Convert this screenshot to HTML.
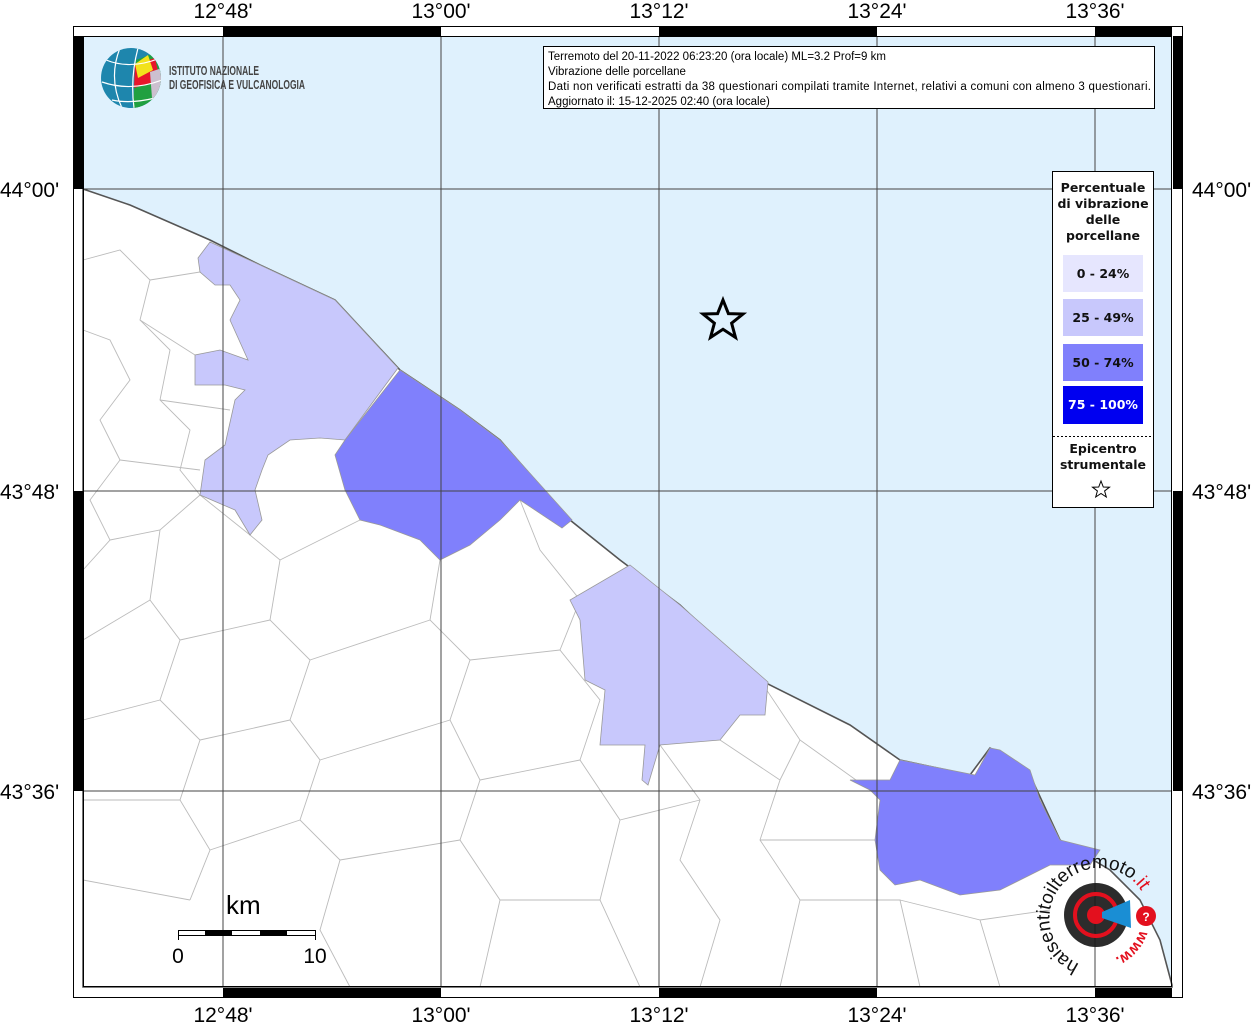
<!DOCTYPE html>
<html><head><meta charset="utf-8"><style>
html,body{margin:0;padding:0;background:#fff;}
svg{display:block;font-family:"Liberation Sans",sans-serif;}
</style></head><body>
<svg width="1255" height="1024" viewBox="0 0 1255 1024" xmlns="http://www.w3.org/2000/svg">
<rect width="1255" height="1024" fill="#fff"/>
<rect x="83" y="36" width="1089" height="951" fill="#dff1fd"/>
<path d="M83,189 L130,205 L210,240 L260,265 L335,300 L400,370 L460,410 L500,440 L570,520 L620,560 L680,605 L760,680 L850,725 L900,760 L970,775 L990,748 L1030,775 L1060,840 L1110,870 L1140,900 L1160,940 L1172,985 L1172,987 L83,987 Z" fill="#fff" stroke="#555" stroke-width="1.6"/>
<g fill="none" stroke="#bbb" stroke-width="0.9">
<path d="M83,260 L120,250 L150,280 L140,320 L170,350 L160,400 L190,430 L180,470 L200,495"/>
<path d="M83,330 L110,340 L130,380 L100,420 L120,460 L90,500 L110,540 L83,570"/>
<path d="M150,280 L200,272 M140,320 L195,355 M160,400 L230,410 M120,460 L200,470"/>
<path d="M110,540 L160,530 L200,495 L250,535 L280,560 L320,540 L360,520"/>
<path d="M160,530 L150,600 L180,640 L160,700 L200,740 L180,800 L210,850 L190,900"/>
<path d="M83,640 L150,600 M83,720 L160,700 M83,800 L180,800 M83,880 L190,900"/>
<path d="M280,560 L270,620 L310,660 L290,720 L320,760 L300,820 L340,860 L320,930 L350,987"/>
<path d="M180,640 L270,620 M200,740 L290,720 M210,850 L300,820"/>
<path d="M440,560 L430,620 L470,660 L450,720 L480,780 L460,840 L500,900 L480,987"/>
<path d="M310,660 L430,620 M320,760 L450,720 M340,860 L460,840"/>
<path d="M520,500 L540,550 L580,600 L560,650 L600,700 L580,760 L620,820 L600,900 L640,987"/>
<path d="M470,660 L560,650 M480,780 L580,760 M500,900 L600,900"/>
<path d="M660,745 L700,800 L680,860 L720,920 L700,987 M720,740 L780,780 L760,840 L800,900 L780,987"/>
<path d="M620,820 L700,800 M760,680 L800,740 L780,780 M800,740 L870,790 M760,840 L875,840 M800,900 L900,900 L920,987"/>
<path d="M900,900 L980,920 L1000,987 M980,920 L1050,910"/>
<path d="M240,300 L300,330 L330,380 M300,330 L290,440"/>
</g>
<g stroke="#999" stroke-width="0.8">
<path d="M198,258 L210,242 L260,265 L335,300 L398,368 L345,440 L320,438 L290,440 L268,455 L262,470 L255,490 L262,520 L250,535 L235,510 L200,495 L205,460 L225,445 L235,400 L245,390 L225,385 L195,385 L195,355 L220,350 L248,360 L230,320 L240,300 L230,285 L215,285 L200,272 Z" fill="#c8c8fc"/>
<path d="M400,370 L460,410 L500,440 L572,520 L562,528 L520,500 L500,520 L470,545 L440,560 L420,540 L380,525 L360,520 L345,490 L335,455 L345,440 Z" fill="#8080fc"/>
<path d="M630,565 L680,605 L768,682 L765,715 L740,715 L720,740 L660,745 L648,785 L642,780 L645,745 L600,745 L605,690 L585,680 L580,620 L570,600 Z" fill="#c8c8fc"/>
<path d="M850,780 L870,790 L880,800 L875,840 L880,870 L895,885 L920,880 L960,895 L1000,890 L1050,865 L1090,865 L1100,850 L1060,840 L1040,800 L1030,770 L1000,750 L990,748 L975,775 L900,760 L890,780 Z" fill="#8080fc"/>
</g>
<g stroke="#444" stroke-width="1">
<line x1="223" y1="36" x2="223" y2="987"/><line x1="441" y1="36" x2="441" y2="987"/>
<line x1="659" y1="36" x2="659" y2="987"/><line x1="877" y1="36" x2="877" y2="987"/>
<line x1="1095" y1="36" x2="1095" y2="987"/>
<line x1="83" y1="189" x2="1172" y2="189"/><line x1="83" y1="491" x2="1172" y2="491"/>
<line x1="83" y1="791" x2="1172" y2="791"/>
</g>
<rect x="73.5" y="26.5" width="1109" height="971" fill="none" stroke="#000"/>
<rect x="83.5" y="36.5" width="1088" height="950" fill="none" stroke="#000"/>
<g fill="#000">
<rect x="223" y="27" width="218" height="9"/><rect x="659" y="27" width="218" height="9"/><rect x="1095" y="27" width="77" height="9"/>
<rect x="223" y="988" width="218" height="9"/><rect x="659" y="988" width="218" height="9"/><rect x="1095" y="988" width="77" height="9"/>
<rect x="74" y="36" width="9" height="153"/><rect x="74" y="491" width="9" height="300"/>
<rect x="1173" y="36" width="9" height="153"/><rect x="1173" y="491" width="9" height="300"/>
</g>
<g font-size="21" fill="#000" text-anchor="middle">
<text x="223" y="18">12°48'</text><text x="441" y="18">13°00'</text><text x="659" y="18">13°12'</text><text x="877" y="18">13°24'</text><text x="1095" y="18">13°36'</text>
<text x="223" y="1022">12°48'</text><text x="441" y="1022">13°00'</text><text x="659" y="1022">13°12'</text><text x="877" y="1022">13°24'</text><text x="1095" y="1022">13°36'</text>
</g>
<g font-size="21" fill="#000">
<text x="0" y="197">44°00'</text><text x="0" y="499">43°48'</text><text x="0" y="799">43°36'</text>
<text x="1192" y="197">44°00'</text><text x="1192" y="499">43°48'</text><text x="1192" y="799">43°36'</text>
</g>
<defs><clipPath id="g"><circle cx="131" cy="78" r="30"/></clipPath></defs>
<g clip-path="url(#g)">
<rect x="100" y="47" width="62" height="62" fill="#1e86ad"/>
<path d="M136,60 L162,50 L162,109 L133,109 Z" fill="#20a040"/>
<path d="M135,64 L155,58 L160,80 L134,88 Z" fill="#e8162a"/>
<path d="M135,64 L148,55 L153,70 L138,78 Z" fill="#f2e21c"/>
<path d="M150,72 L162,68 L162,95 L152,98 Z" fill="#ccc0cf"/>
<path d="M106,60 Q131,70 160,58 M102,82 Q131,92 162,80 M112,100 Q131,104 155,98 M120,48 Q108,78 122,108 M138,48 Q130,78 134,108" stroke="#fff" stroke-width="1.2" fill="none"/>
</g>
<g font-family="'Liberation Sans Narrow','Liberation Sans',sans-serif" font-size="12.5" font-weight="bold" fill="#444">
<text x="169" y="75" textLength="90" lengthAdjust="spacingAndGlyphs">ISTITUTO NAZIONALE</text>
<text x="169" y="89" textLength="136" lengthAdjust="spacingAndGlyphs">DI GEOFISICA E VULCANOLOGIA</text>
</g>
<rect x="543.5" y="46.5" width="611" height="62" fill="#fff" stroke="#000"/>
<g font-size="11.5" fill="#000">
<text x="548" y="60">Terremoto del 20-11-2022 06:23:20 (ora locale) ML=3.2 Prof=9 km</text>
<text x="548" y="75">Vibrazione delle porcellane</text>
<text x="548" y="90" textLength="603">Dati non verificati estratti da 38 questionari compilati tramite Internet, relativi a comuni con almeno 3 questionari.</text>
<text x="548" y="105">Aggiornato il: 15-12-2025 02:40 (ora locale)</text>
</g>
<path d="M723,300 L728.4,313.6 L743,314 L731.6,323.2 L735.5,337.5 L723,329.3 L710.5,337.5 L714.4,323.2 L703,314 L717.6,313.6 Z" fill="none" stroke="#000" stroke-width="3"/>
<rect x="1052.5" y="171.5" width="101" height="336" fill="#fff" stroke="#000"/>
<g font-family="'DejaVu Sans',sans-serif" font-weight="bold" font-size="12.5" text-anchor="middle" fill="#111">
<text x="1103" y="192">Percentuale</text><text x="1103" y="208">di vibrazione</text><text x="1103" y="224">delle</text><text x="1103" y="240">porcellane</text>
<rect x="1063" y="255" width="80" height="37" fill="#e6e6fe"/><text x="1103" y="278">0 - 24%</text>
<rect x="1063" y="299" width="80" height="37" fill="#c8c8fc"/><text x="1103" y="322">25 - 49%</text>
<rect x="1063" y="344" width="80" height="37" fill="#8080fc"/><text x="1103" y="367">50 - 74%</text>
<rect x="1063" y="386" width="80" height="38" fill="#0000f0"/><text x="1103" y="409" fill="#fff">75 - 100%</text>
<text x="1103" y="453">Epicentro</text><text x="1103" y="469">strumentale</text>
</g>
<line x1="1053" y1="436.5" x2="1153" y2="436.5" stroke="#000" stroke-dasharray="2,2"/>
<path d="M1101,481 L1103.3,487 L1109.5,487.2 L1104.6,491 L1106.3,497 L1101,493.5 L1095.7,497 L1097.4,491 L1092.5,487.2 L1098.7,487 Z" fill="none" stroke="#000" stroke-width="1"/>
<text x="226" y="914" font-size="26" fill="#000">km</text>
<rect x="178.5" y="930.5" width="137" height="5" fill="#fff" stroke="#000"/>
<rect x="205" y="931" width="27" height="4" fill="#000"/><rect x="260" y="931" width="27" height="4" fill="#000"/>
<line x1="178.5" y1="930" x2="178.5" y2="940" stroke="#000"/><line x1="315.5" y1="930" x2="315.5" y2="940" stroke="#000"/>
<text x="178" y="963" font-size="21" text-anchor="middle">0</text><text x="315" y="963" font-size="21" text-anchor="middle">10</text>
<circle cx="1096" cy="915" r="32" fill="#1a1a1a" opacity="0.92"/>
<circle cx="1096" cy="915" r="21" fill="none" stroke="#e3101e" stroke-width="4"/>
<circle cx="1096" cy="915" r="9" fill="#e3101e"/>
<path d="M1102,912 L1130,900 L1131,928 L1102,918 Z" fill="#1a8ed4"/>
<circle cx="1146" cy="916" r="10" fill="#e3101e"/><text x="1146" y="921" font-size="12" fill="#fff" text-anchor="middle" font-weight="bold">?</text>
<defs><path id="arc" d="M1096,968 A50,50 0 1,1 1146,900"/><path id="arc2" d="M1140,930 A46,46 0 0,1 1096,962"/></defs>
<text font-size="19" fill="#111"><textPath href="#arc" startOffset="8%">haisentitoilterremoto<tspan fill="#e3101e">.it</tspan></textPath></text>
<text font-size="15" fill="#e3101e" font-weight="bold"><textPath href="#arc2">www.</textPath></text>
</svg>
</body></html>
